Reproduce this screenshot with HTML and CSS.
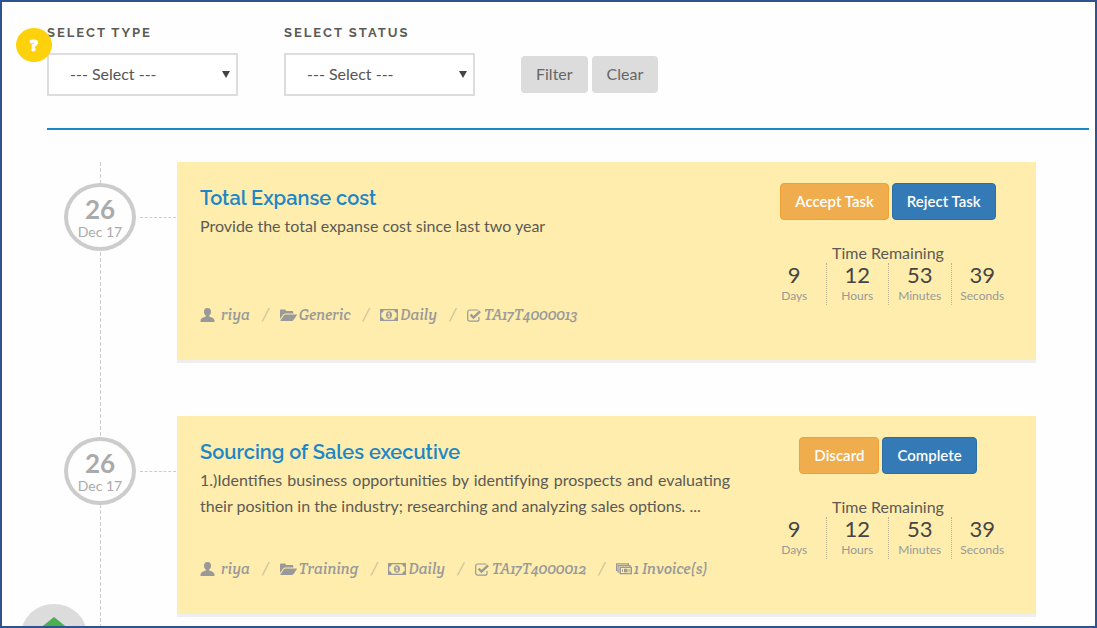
FILE: index.html
```html
<!DOCTYPE html>
<html lang="en">
<head>
<meta charset="utf-8">
<title>Tasks</title>
<link rel="stylesheet" href="styles.css">
</head>
<body>
<svg class="defs" aria-hidden="true">
  <symbol id="user" viewBox="0 0 15 14"><path d="M7.500 0C9.900 0 11 1.600 11 3.700c0 1.600-.7 3-1.700 3.800v1.200c2.800.6 5.200 1.800 5.200 3.700V14H.5v-1.600c0-1.900 2.400-3.100 5.200-3.700V7.500C4.700 6.700 4 5.300 4 3.700 4 1.600 5.100 0 7.500 0z"/></symbol>
  <symbol id="folder" viewBox="0 0 17 13"><path d="M0 10V1.500C0 .7.600.5 1.300.5h3.400c.8 0 1.200.5 1.200 1.500h6c.9 0 1.400.5 1.400 1.300v1.200H5.500c-1 0-1.800.4-2.400 1.200z"/><path d="M5.600 5.500H16.500c.5 0 .6.400.3.800l-3.400 4.900c-.4.500-1 .8-1.700.8H.8c-.5 0-.6-.4-.3-.8l3.400-4.900c.4-.5 1-.8 1.700-.8z"/></symbol>
  <symbol id="money" viewBox="0 0 18 12"><path fill-rule="evenodd" d="M0 0h18v12H0zM3.700 1.300C3.700 2.700 2.700 3.700 1.300 3.700v4.600c1.400 0 2.400 1 2.400 2.400h10.600c0-1.400 1-2.400 2.400-2.400V3.700c-1.400 0-2.400-1-2.400-2.400z"/><path fill-rule="evenodd" d="M9 2.200c1.800 0 3 1.700 3 3.800s-1.200 3.800-3 3.800S6 8.100 6 6s1.200-3.800 3-3.800zM8.700 3.600 7.400 4.700l.5.600.6-.4v2.400h-.9v.9h2.700v-.9h-.7V3.600z"/></symbol>
  <symbol id="check" viewBox="0 0 15 13"><path class="stroke" d="M12 8v2.200c0 1.200-.8 2-2 2H2.700c-1.200 0-2-.8-2-2V3c0-1.200.8-2 2-2H10c.6 0 1 .1 1.300.4"/><path class="tick" d="m3.600 5.700 2.900 2.800 6.600-6.200"/></symbol>
  <symbol id="bills" viewBox="0 0 16 12"><path class="stroke" d="M1.800 7.500H.6V.8h11.800v1.400"/><path class="stroke" d="M3.300 9H2.100V2.700H14v1.200"/><path fill-rule="evenodd" d="M3.500 3.800H16v7.400H3.500zM5 5.100v4.800h9.500V5.100z"/><path d="M6 6.200h1v2.600H6zM8 5.800h3.500v3.400H8zM12.500 6.200h1v2.600h-1z"/></symbol>
</svg>

<main class="page">
  <form class="filters">
    <div class="field">
      <label for="type">Select type</label>
      <div class="select">
        <select id="type"><option>--- Select ---</option></select>
        <svg class="caret" viewBox="0 0 8 7" aria-hidden="true"><path d="M0 0h8L4 7z"/></svg>
      </div>
    </div>
    <div class="field">
      <label for="status">Select status</label>
      <div class="select">
        <select id="status"><option>--- Select ---</option></select>
        <svg class="caret" viewBox="0 0 8 7" aria-hidden="true"><path d="M0 0h8L4 7z"/></svg>
      </div>
    </div>
    <div class="actions">
      <button class="btn" type="button">Filter</button>
      <button class="btn" type="button">Clear</button>
    </div>
  </form>

  <section class="timeline">
    <article class="entry">
      <div class="when"><time class="date" datetime="2017-12-26"><b>26</b>Dec 17</time></div>
      <div class="card">
        <div class="body">
          <h2><a href="#">Total Expanse cost</a></h2>
          <p>Provide the total expanse cost since last two year</p>
          <ul class="meta">
            <li class="owner"><svg class="i-user"><use href="#user"/></svg><a href="#">riya</a></li>
            <li><svg class="i-folder"><use href="#folder"/></svg><a href="#">Generic</a></li>
            <li><svg class="i-money"><use href="#money"/></svg><a href="#">Daily</a></li>
            <li><svg class="i-check"><use href="#check"/></svg><a href="#">TA17T4000013</a></li>
          </ul>
        </div>
        <div class="side">
          <div class="buttons">
            <button class="btn warn" type="button">Accept Task</button>
            <button class="btn primary" type="button">Reject Task</button>
          </div>
          <div class="remaining">Time Remaining</div>
          <div class="countdown">
            <div><b>9</b>Days</div><div><b>12</b>Hours</div><div><b>53</b>Minutes</div><div><b>39</b>Seconds</div>
          </div>
        </div>
      </div>
    </article>

    <article class="entry">
      <div class="when"><time class="date" datetime="2017-12-26"><b>26</b>Dec 17</time></div>
      <div class="card">
        <div class="body">
          <h2><a href="#">Sourcing of Sales executive</a></h2>
          <p>1.)Identifies business opportunities by identifying prospects and evaluating their position in the industry; researching and analyzing sales options. ...</p>
          <ul class="meta">
            <li class="owner"><svg class="i-user"><use href="#user"/></svg><a href="#">riya</a></li>
            <li><svg class="i-folder"><use href="#folder"/></svg><a href="#">Training</a></li>
            <li><svg class="i-money"><use href="#money"/></svg><a href="#">Daily</a></li>
            <li><svg class="i-check"><use href="#check"/></svg><a href="#">TA17T4000012</a></li>
            <li><svg class="i-bills"><use href="#bills"/></svg><a href="#">1 Invoice(s)</a></li>
          </ul>
        </div>
        <div class="side">
          <div class="buttons">
            <button class="btn warn" type="button">Discard</button>
            <button class="btn primary" type="button">Complete</button>
          </div>
          <div class="remaining">Time Remaining</div>
          <div class="countdown">
            <div><b>9</b>Days</div><div><b>12</b>Hours</div><div><b>53</b>Minutes</div><div><b>39</b>Seconds</div>
          </div>
        </div>
      </div>
    </article>
  </section>
</main>

<button class="help" type="button" aria-label="Help">?</button>
<button class="to-top" type="button" aria-label="Back to top"><svg viewBox="0 0 40 36" aria-hidden="true"><path d="M20 0 40 16H28v20H12V16H0z"/></svg></button>
<div class="frame"></div>
</body>
</html>
```
FILE: styles.css
```css
* { box-sizing: border-box; }

body {
  margin: 0;
  background: #fefefe;
  color: #5c5a55;
  font: 16px/26px Lato, sans-serif;
}

.defs { position: absolute; width: 0; height: 0; }

.frame {
  position: fixed;
  inset: 0;
  border: 2px solid #2f5290;
  pointer-events: none;
}

.page {
  display: flex;
  flex-direction: column;
  min-height: 100vh;
  padding: 23px 8px 0 47px;
}

.filters {
  display: flex;
  gap: 46px;
  padding-bottom: 32px;
  border-bottom: 2px solid #1c86c8;
}

.field { width: 191px; }

.field label {
  display: block;
  margin-bottom: 10px;
  font: 700 13px/20px Raleway, "Open Sans", sans-serif;
  letter-spacing: 2px;
  text-transform: uppercase;
}

.select { position: relative; }

.select select {
  display: block;
  width: 100%;
  height: 43px;
  padding: 0 21px 2px;
  border: 2px solid #ddd;
  border-radius: 0;
  appearance: none;
  background: #fff;
  color: #555;
  font: 16px Lato, sans-serif;
}

.caret {
  position: absolute;
  top: 18px;
  right: 8px;
  width: 8px;
  height: 7px;
  fill: #444;
}

.actions {
  display: flex;
  align-items: flex-start;
  gap: 4px;
  padding-top: 33px;
}

.btn {
  height: 37px;
  padding: 0 14px 2px;
  border: 1px solid transparent;
  border-radius: 4px;
  background: #dcdcdc;
  color: #666;
  font: 16px Lato, sans-serif;
}

.btn.warn, .btn.primary { color: #fff; font-weight: 600; font-size: 15px; }
.btn.warn { background: #f0ad4e; border-color: #eea236; }
.btn.primary { background: #337ab7; border-color: #2e6da4; }

.timeline {
  flex: 1;
  margin: 32px 53px 0 0;
  background: repeating-linear-gradient(#ccc 0 4px, transparent 4px 6px) 53px 0 / 1px 100% no-repeat;
}

.entry {
  display: grid;
  grid-template-columns: 130px 1fr;
}

.entry + .entry { margin-top: 53px; }

.when {
  display: flex;
  align-items: flex-start;
  gap: 4px;
  padding: 21px 1px 0 17px;
}

.when::after {
  content: "";
  flex: 1;
  margin-top: 34px;
  border-top: 1px dashed #ccc;
}

.date {
  width: 72px;
  height: 68px;
  padding-top: 8px;
  border: 4px solid #ccc;
  border-radius: 50%;
  background: #fefefe;
  color: #aaa;
  font-size: 14px;
  line-height: 16px;
  text-align: center;
}

.date b {
  display: block;
  font-size: 26px;
  line-height: 29px;
}

.card {
  display: grid;
  grid-template-columns: 1fr 250px;
  gap: 33px;
  min-height: 201px;
  padding: 21px 23px 34px;
  border-bottom: 3px solid #eee;
  background: #feedad;
  background-clip: padding-box;
}

.body { display: flex; flex-direction: column; }

.body h2 {
  margin: 0;
  font: 600 20px/30px Raleway, "Open Sans", sans-serif;
}

.body h2 a { color: #1c86c8; text-decoration: none; }

.body p { margin: 0; text-align: justify; }

.meta {
  display: flex;
  margin: auto 0 0;
  padding: 0;
  list-style: none;
  color: #999;
  font: italic 15px/22px "Crete Round", "Liberation Serif", serif;
  white-space: nowrap;
}

.meta li { display: flex; align-items: center; gap: 2px; }
.meta .owner { gap: 6px; }
.meta li + li::before { content: "/"; margin: 0 9px 0 12px; color: #ccc098; }
.meta a { color: inherit; text-decoration: none; }
.meta svg { fill: #999; }

.i-user { width: 15px; height: 14px; }
.i-folder { width: 17px; height: 13px; }
.i-money { width: 18px; height: 12px; }
.i-check { width: 15px; height: 13px; }
.i-bills { width: 16px; height: 12px; }

.stroke { fill: none; stroke: #999; stroke-width: 1.200; }
.tick { fill: none; stroke: #999; stroke-width: 2.400; }

.side { text-align: center; }

.buttons { display: flex; justify-content: center; gap: 3px; }

.remaining { margin-top: 23px; line-height: 20px; }

.countdown { display: grid; grid-template-columns: repeat(4, 1fr); }

.countdown div {
  color: #999;
  font-size: 12px;
  line-height: 18px;
}

.countdown div + div { border-left: 1px dotted #bbb08a; }

.countdown b {
  display: block;
  color: #444;
  font-size: 22px;
  font-weight: 400;
  line-height: 24px;
}

.help {
  position: fixed;
  top: 28px;
  left: 16px;
  width: 36px;
  height: 34px;
  padding: 0;
  border: 0;
  border-radius: 50%;
  background: #fdd10b;
  color: #fff;
  font: 800 15px "Open Sans", sans-serif;
  -webkit-text-stroke: 1px #fff;
}

.to-top {
  position: fixed;
  bottom: -38px;
  left: 21px;
  width: 66px;
  height: 62px;
  padding: 13px;
  border: 0;
  border-radius: 50%;
  background: #dcdcdc;
}

.to-top svg { display: block; width: 100%; fill: #4caf50; }
```
